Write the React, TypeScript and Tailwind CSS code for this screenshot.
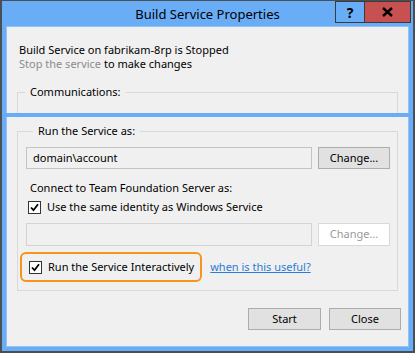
import React from 'react';

const font = { fontFamily: '"Noto Sans", "Segoe UI", sans-serif' };

const CheckBox: React.FC = () => (
  <span className="w-[13px] h-[13px] shrink-0 border border-[#333333] bg-white flex items-center justify-center">
    <svg width="9" height="9" viewBox="0 0 9 9">
      <path d="M1 4.5 L3.5 7.2 L8 1.2" fill="none" stroke="#000" strokeWidth="1.8" />
    </svg>
  </span>
);

const Button: React.FC<{ label: string; className?: string }> = ({ label, className }) => (
  <button className={`h-[22px] text-[11px] text-[#000] bg-[#e1e1e1] border border-[#adadad] ${className ?? ''}`}>
    {label}
  </button>
);

export default function App() {
  return (
    <div
      className="w-[415px] h-[353px] flex flex-col bg-[#6aadf7] border-t border-l-2 border-r-2 border-b-2 border-[#4b4f54] text-[11px] text-[#000]"
      style={font}
    >
      {/* title bar */}
      <div className="relative h-[25px] shrink-0 flex items-center justify-center">
        <span className="text-[13px] leading-none text-black pt-[1px]">Build Service Properties</span>
        <div className="absolute right-[2px] top-0 flex">
          <div className="w-[29px] h-[22px] border border-[#3b3b3b] border-r-0 bg-[#6aadf7] flex items-center justify-center font-bold text-[14px]">
            ?
          </div>
          <div className="w-[47px] h-[22px] border border-[#3b3b3b] bg-[#c75050] flex items-center justify-center">
            <svg width="11" height="10" viewBox="0 0 11 10">
              <path d="M1 1 L10 9 M10 1 L1 9" stroke="#000" strokeWidth="2.4" />
            </svg>
          </div>
        </div>
      </div>

      {/* upper panel */}
      <div className="mx-[4px] h-[87px] shrink-0 bg-[#f0f0f0] border border-b-0 border-[#92c3f8] overflow-hidden">
        <div className="pl-[12px] pt-[16px] leading-[14px]">
          <div>Build Service on fabrikam-8rp is Stopped</div>
          <div>
            <span className="text-[#8c8c8c]">Stop the service</span> to make changes
          </div>
        </div>
        <fieldset className="mx-[10px] mt-[13px] h-[40px] border border-[#d9d9d9]">
          <legend className="ml-[7px] px-[5px] leading-[16px]">Communications:</legend>
        </fieldset>
      </div>

      {/* separator */}
      <div className="h-[4px] shrink-0" />

      {/* lower panel */}
      <div className="mx-[4px] mb-[4px] flex-1 flex flex-col bg-[#f0f0f0] border border-t-0 border-[#92c3f8]">
        <fieldset className="mx-[10px] mt-[6px] pl-[8px] pr-[7px] pb-[8px] border border-[#d9d9d9]">
          <legend className="ml-[7px] px-[5px] leading-[16px]">Run the Service as:</legend>
          <div className="mt-[8px] flex gap-[6px]">
            <div className="w-[286px] h-[22px] border border-[#c4c4c4] flex items-center pl-[6px]">domain\account</div>
            <Button label="Change..." className="w-[72px]" />
          </div>
          <div className="mt-[11px] pl-[4px] leading-[16px]">Connect to Team Foundation Server as:</div>
          <div className="mt-[3px] pl-[2px] flex items-center gap-[6px] h-[16px]">
            <CheckBox />
            <span>Use the same identity as Windows Service</span>
          </div>
          <div className="mt-[8px] flex gap-[6px]">
            <div className="w-[286px] h-[23px] border border-[#d4d4d4]" />
            <button className="w-[72px] h-[23px] bg-white border border-[#d9d9d9] text-[#9a9a9a] text-[11px]">
              Change...
            </button>
          </div>
          <div className="mt-[6px] -ml-[6px] flex items-center gap-[8px]">
            <div className="h-[30px] pl-[7px] pr-[6px] flex items-center gap-[6px] border-[2.5px] border-[#f7941d] rounded-[6px]">
              <CheckBox />
              <span>Run the Service Interactively</span>
            </div>
            <a className="text-[#2c7bd6] underline">when is this useful?</a>
          </div>
        </fieldset>
        <div className="mt-[17px] mr-[7px] flex justify-end gap-[8px]">
          <Button label="Start" className="w-[73px] border-[#4a9be0] bg-[#e1e1e1]" />
          <Button label="Close" className="w-[72px]" />
        </div>
      </div>
    </div>
  );
}
